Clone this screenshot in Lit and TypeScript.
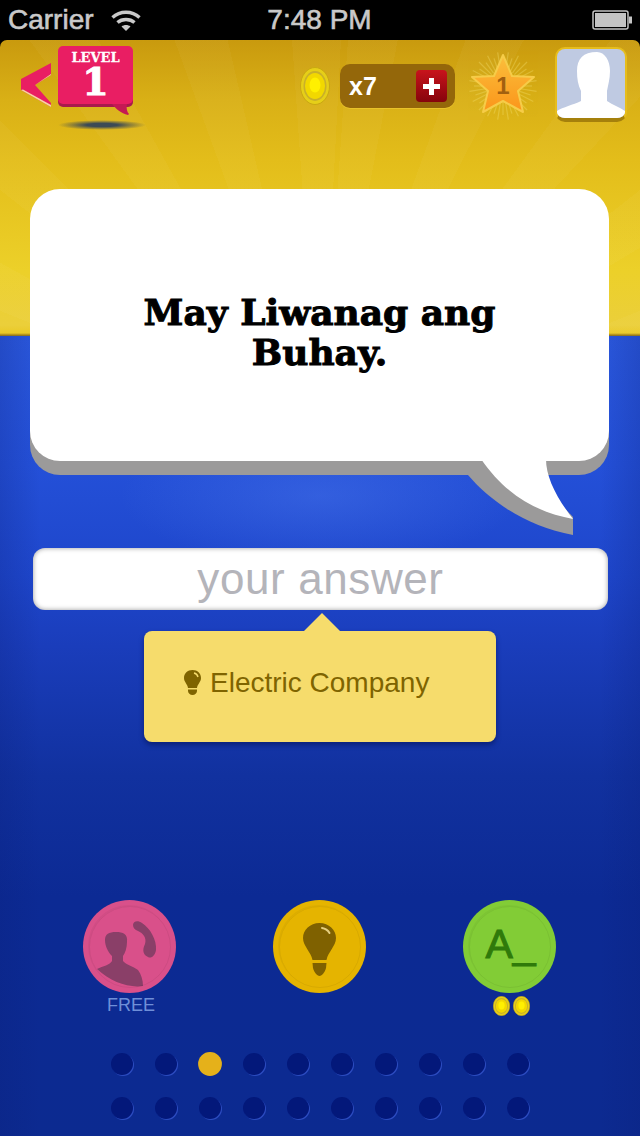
import { LitElement, css, html, svg } from 'lit';
import { customElement } from 'lit/decorators.js';

const SANS = '"Liberation Sans", Arial, sans-serif';

// rays round the level star
const starRays = Array.from({ length: 40 }, (_, i) => {
    const a = (i / 40) * Math.PI * 2;
    const r = i % 2 ? 34 : 29;
    return svg`<line x1="${35 + Math.cos(a) * 16}" y1="${36 + Math.sin(a) * 16}" x2="${35 + Math.cos(a) * r}" y2="${36 + Math.sin(a) * r}"></line>`;
});

@customElement('app-root')
export class AppRoot extends LitElement {
    static styles = css`
        :host{
            display: block;
            width: 640px;
            height: 1136px;
            background: #000;
            overflow: hidden;
            font-family: "Liberation Sans", Arial, sans-serif;
        }

        /* STATUS BAR */

        .status{
            height: 40px;
            display: grid;
            grid-template-columns: 1fr auto 1fr;
            align-items: center;
            padding: 0 7px 0 8px;
            color: #c9c9c9;
            font-size: 28px;
            line-height: 40px;
            box-sizing: border-box;
        }
        .carrier{
            display: flex;
            align-items: center;
            gap: 17px;
            -webkit-text-stroke: 0.6px #c9c9c9;
        }
        .time{
            -webkit-text-stroke: 0.6px #c9c9c9;
            margin-left: -2px;
        }
        .battery{
            justify-self: end;
            display: block;
        }

        /* GAME BACKGROUND */

        .game{
            position: relative;
            height: 1096px;
            border-radius: 7px 7px 0 0;
            overflow: hidden;
            background-repeat: no-repeat;
            background-size: 640px 296px, 640px 296px, 640px 296px, 640px 800px, 640px 800px, 640px 800px;
            background-position: 0 0, 0 0, 0 0, 0 100%, 0 100%, 0 100%;
            background-image:
                linear-gradient(to bottom, transparent 293px, #a8861a 295px, #7d6a26 296px),
                repeating-conic-gradient(from 4deg at 320px 400px, rgba(255,255,255,0.03) 0deg 7deg, rgba(255,255,255,0) 7deg 16deg),
                linear-gradient(to bottom, #c99a0e 0, #d9b016 60px, #e3bd1a 120px, #ecd029 230px, #ebcf3a 285px, #e9c71f 296px),
                linear-gradient(to right, rgba(10,30,120,0.22) 0, rgba(10,30,120,0) 40px, rgba(10,30,120,0) 600px, rgba(10,30,120,0.22) 640px),
                radial-gradient(ellipse 200px 70px at 320px 160px, rgba(90,135,245,0.3), rgba(90,135,245,0)),
                linear-gradient(to bottom, #2b58dd 0, #2450d8 130px, #1e46cb 240px, #1a3dbb 310px, #11319f 440px, #0c2a94 560px, #0c2a90 800px);
        }

        /* HEADER */

        .header{
            height: 149px;
            display: flex;
            align-items: flex-start;
            padding: 0 13px 0 21px;
            box-sizing: border-box;
        }
        .back{
            margin-top: 23px;
            display: block;
        }
        .level{
            position: relative;
            width: 75px;
            height: 58px;
            margin: 6px 0 0 7px;
            background: #e91e63;
            border-radius: 5px;
            box-shadow: 0 3px 0 #a81a4c;
            color: #fff;
            font-family: "DejaVu Serif", serif;
            font-weight: 700;
            text-align: center;
        }
        .level-label{
            font-size: 13px;
            line-height: 14px;
            padding-top: 5px;
            -webkit-text-stroke: 0.3px #fff;
        }
        .level-num{
            font-size: 38px;
            line-height: 30px;
            margin-top: 2px;
            -webkit-text-stroke: 1px #fff;
        }
        .level-tail{
            position: absolute;
            left: 54px;
            top: 58px;
        }
        .level-shadow{
            position: absolute;
            left: 0;
            top: 74px;
            width: 88px;
            height: 10px;
            border-radius: 50%;
            background: radial-gradient(closest-side, #3c4a55 35%, rgba(60,74,85,0.5) 65%, rgba(60,74,85,0));
        }
        .coin-big{
            margin: 27px 0 0 auto;
            display: block;
        }
        .coin-big svg, .mini-coins svg{
            display: block;
        }
        .coins{
            width: 115px;
            height: 44px;
            margin: 24px 0 0 10px;
            padding: 0 8px 0 9px;
            box-sizing: border-box;
            display: flex;
            align-items: center;
            justify-content: space-between;
            background: #94670a;
            border-radius: 10px;
            box-shadow: 0 1px 0 #e8c22a;
            color: #fff;
            font-size: 25px;
            font-weight: 700;
        }
        .plus{
            width: 31px;
            height: 32px;
            border-radius: 4px;
            background: linear-gradient(to bottom, #c8141c, #86040c);
            display: flex;
            align-items: center;
            justify-content: center;
        }
        .star{
            display: block;
            margin: 10px 0 0 13px;
        }
        .avatar{
            width: 72px;
            height: 75px;
            margin: 7px 0 0 17px;
            box-sizing: border-box;
            border: 2px solid #e6bd1c;
            border-bottom: 4px solid #a5800c;
            border-radius: 10px;
            background: #bfcae2;
            overflow: hidden;
        }
        .avatar svg{
            display: block;
        }

        /* QUESTION BUBBLE */

        .bubble{
            position: relative;
            height: 272px;
            margin: 0 31px 0 30px;
            border-radius: 30px;
            background: #fff;
            box-shadow: 0 14px 0 #9b9a9a;
            display: flex;
            align-items: center;
            justify-content: center;
            box-sizing: border-box;
            padding: 14px 100px 0;
            color: #000;
            font-family: "DejaVu Serif", serif;
            font-size: 36px;
            font-weight: 700;
            line-height: 40px;
            text-align: center;
            -webkit-text-stroke: 1px #000;
        }
        .bubble-tail{
            position: absolute;
            left: 430px;
            top: 270px;
        }

        /* ANSWER AND HINT */

        .answer{
            height: 62px;
            margin: 87px 32px 0 33px;
            border-radius: 12px;
            background: #fff;
            box-shadow: inset 0 0 5px rgba(0,0,0,0.4);
            color: #b4b4ba;
            font-size: 44px;
            line-height: 62px;
            text-align: center;
            letter-spacing: 0.6px;
        }
        .hint{
            position: relative;
            width: 352px;
            height: 111px;
            margin: 21px auto 0;
            padding: 0 0 8px 40px;
            box-sizing: border-box;
            display: flex;
            align-items: center;
            gap: 9px;
            background: #f6dc6c;
            border-radius: 8px;
            box-shadow: 0 3px 5px rgba(5,20,90,0.6);
            color: #7f6400;
            font-size: 28px;
        }
        .hint-arrow{
            position: absolute;
            left: 159px;
            top: -18px;
        }
        .hint svg.bulb{
            display: block;
        }

        /* LIFELINES */

        .actions{
            display: grid;
            grid-template-columns: repeat(3, 93px);
            justify-content: center;
            column-gap: 97px;
            margin: 158px 0 0 -2px;
        }
        .action{
            display: flex;
            flex-direction: column;
            align-items: center;
        }
        .disc{
            position: relative;
            width: 93px;
            height: 93px;
            border-radius: 50%;
            display: flex;
            align-items: center;
            justify-content: center;
            overflow: hidden;
        }
        .disc::before{
            content: "";
            position: absolute;
            inset: 6px 5px 5px 6px;
            border-radius: 50%;
            border: 1px solid rgba(0,0,0,0.06);
            box-shadow: -1px -1px 0 rgba(0,0,0,0.04);
        }
        .disc.pink{ background: #d9508a; }
        .disc.gold{ background: #e5b400; }
        .disc.green{ background: #82cc36; }
        .answer-icon{
            color: #2f7a0a;
            font-size: 41px;
            line-height: 41px;
            margin-top: -4px;
            padding-left: 3px;
            -webkit-text-stroke: 1px #2f7a0a;
        }
        .free{
            color: #6f8fd8;
            font-size: 18px;
            line-height: 24px;
            padding-left: 4px;
        }
        .mini-coins{
            display: flex;
            gap: 3px;
            margin-top: 3px;
            padding-left: 4px;
        }

        /* PROGRESS DOTS */

        .dots{
            display: grid;
            grid-template-columns: repeat(10, 22px);
            column-gap: 22px;
            row-gap: 22px;
            justify-content: center;
            margin: 36px 0 0 -1px;
        }
        .dot{
            width: 22px;
            height: 22px;
            box-sizing: border-box;
            border-radius: 50%;
            background: #03187a;
            box-shadow: 1px 1px 0 #2c4cc0;
        }
        .dot.on{
            background: #e5b11a;
            box-shadow: none;
            transform: scale(1.08);
        }
    `;

    renderCoin(width: number, height: number) {
        return html`<svg width="${width}" height="${height}" viewBox="0 0 30 38" preserveAspectRatio="none">
            <ellipse cx="15" cy="19" rx="14.5" ry="18.5" fill="#e6cf18" stroke="#c9a812" stroke-width="1"></ellipse>
            <ellipse cx="15" cy="19" rx="11.5" ry="15" fill="#c9b02a"></ellipse>
            <ellipse cx="15" cy="19" rx="10" ry="13" fill="#f2d800"></ellipse>
            <ellipse cx="15" cy="18" rx="5.5" ry="7.5" fill="#fff000"></ellipse>
        </svg>`;
    }

    render() {
        return html`
            <div class="status">
                <div class="carrier">
                    Carrier
                    <svg width="30" height="24" viewBox="0 0 30 24" fill="none" stroke="#c9c9c9" stroke-width="3.4">
                        <path d="M1.5 9.5 C9 2.5 21 2.5 28.5 9.5"></path>
                        <path d="M6.5 14.5 C11 10.5 19 10.5 23.5 14.5"></path>
                        <path d="M15 23 L10.5 18.5 C13 16.5 17 16.5 19.5 18.5 Z" fill="#c9c9c9" stroke="none"></path>
                    </svg>
                </div>
                <div class="time">7:48 PM</div>
                <svg class="battery" width="41" height="20" viewBox="0 0 41 20">
                    <rect x="1" y="1" width="35" height="18" rx="2" fill="none" stroke="#c4c4c4" stroke-width="1.5"></rect>
                    <rect x="3" y="3" width="31" height="14" fill="#c4c4c4"></rect>
                    <rect x="37" y="6.5" width="3" height="7" fill="#c4c4c4"></rect>
                </svg>
            </div>

            <main class="game">
                <header class="header">
                    <svg class="back" width="30" height="44" viewBox="0 0 30 44">
                        <path d="M30 0 L0 16 L0 27 L30 44 L30 40 L14 22 L30 12 Z" fill="#e91e63"></path>
                        <path d="M0 27 L30 44 L30 42 L2 26.5 Z" fill="#f6d8a0"></path>
                        <path d="M30 12 L14 22 L30 11 Z" fill="#f6d8a0"></path>
                    </svg>
                    <div class="level">
                        <div class="level-label">LEVEL</div>
                        <div class="level-num">1</div>
                        <svg class="level-tail" width="18" height="12" viewBox="0 0 18 12">
                            <path d="M0 0 L15 0 C14 4 15 8 17 10 L16 11 C9 9 4 5 0 0 Z" fill="#c41a54"></path>
                        </svg>
                        <div class="level-shadow"></div>
                    </div>

                    <div class="coin-big">${this.renderCoin(30, 38)}</div>
                    <div class="coins">
                        x7
                        <div class="plus">
                            <svg width="17" height="17" viewBox="0 0 17 17"><path d="M6 0 H11 V6 H17 V11 H11 V17 H6 V11 H0 V6 H6 Z" fill="#fff"></path></svg>
                        </div>
                    </div>
                    <svg class="star" width="70" height="70" viewBox="0 0 70 70">
                        <defs>
                            <linearGradient id="star-fill" x1="0" y1="0" x2="0" y2="1">
                                <stop offset="0" stop-color="#fbbf3c"></stop>
                                <stop offset="1" stop-color="#fb951a"></stop>
                            </linearGradient>
                        </defs>
                        <g stroke="#f4e070" stroke-width="1.2" opacity="0.35">${starRays}</g>
                        <path d="M35 5 L44 26 L66 27 L50 41 L55 62 L35 51 L15 62 L20 41 L4 27 L26 26 Z" fill="url(#star-fill)" stroke="#f6cc48" stroke-width="2" stroke-linejoin="round"></path>
                        <text x="35" y="44" text-anchor="middle" font-family=${SANS} font-size="24" font-weight="700" fill="#a2600f">1</text>
                    </svg>
                    <div class="avatar">
                        <svg width="68" height="69" viewBox="0 0 68 69">
                            <path d="M0 69 L0 62 C6 58 16 56 24 52 L24 42 C21 36 20 30 20 22 C20 10 26 3 40 3 C48 3 53 12 53 22 C53 30 51 36 50 42 L50 52 C56 56 62 58 68 62 L68 69 Z" fill="#fff"></path>
                        </svg>
                    </div>
                </header>

                <section class="bubble">
                    May Liwanag ang Buhay.
                    <svg class="bubble-tail" width="120" height="80" viewBox="0 0 120 80">
                        <path d="M8 16 C30 42 67 68 113 76 L113 58 L60 2 L8 2 Z" fill="#9b9a9a"></path>
                        <path d="M21 0 L86 0 C86 18 96 38 113 60 C80 54 47 38 21 0 Z" fill="#fff"></path>
                    </svg>
                </section>

                <div class="answer">your answer</div>

                <div class="hint">
                    <svg class="hint-arrow" width="38" height="19" viewBox="0 0 38 19"><path d="M19 0 L38 19 L0 19 Z" fill="#f6dc6c"></path></svg>
                    <svg class="bulb" width="17" height="25" viewBox="0 0 17 25">
                        <path d="M8.5 0 C13.5 0 17 3.5 17 8 C17 12 13.5 14 13 18 L4 18 C3.5 14 0 12 0 8 C0 3.5 3.5 0 8.5 0 Z" fill="#7f6400"></path>
                        <path d="M4 19.5 H13 V21 C13 23 11 25 8.5 25 C6 25 4 23 4 21 Z" fill="#7f6400"></path>
                        <path d="M10 3 C12 3.5 13.5 5 14 7" fill="none" stroke="#f6dc6c" stroke-width="1.4"></path>
                    </svg>
                    Electric Company
                </div>

                <div class="actions">
                    <div class="action">
                        <div class="disc pink">
                            <svg width="93" height="93" viewBox="0 0 93 93">
                                <path d="M14 69 C20 66 27 65 29 61 L29 56 C25 52 22 46 22 40 C22 34 26 32 33 32 C40 32 45 34 44 42 C44 48 42 53 40 56 L40 61 C43 65 50 66 55 70 C58 74 60 80 60 86 C45 88 28 82 14 69 Z" fill="#8a3f68"></path>
                                <path d="M50 25 C50 21 55 20 59 23 C67 28 74 40 73 50 C72 56 68 59 65 57 C60 55 59 50 62 44 C64 38 60 33 55 31 C52 30 50 28 50 25 Z" fill="#8a3f68"></path>
                            </svg>
                        </div>
                        <div class="free">FREE</div>
                    </div>
                    <div class="action">
                        <div class="disc gold">
                            <svg width="93" height="93" viewBox="0 0 93 93">
                                <path d="M46.5 23 C56 23 63 30 63 38 C63 46 55 52 53.5 60 L39.5 60 C38 52 30 46 30 38 C30 30 37 23 46.5 23 Z" fill="#7f6100"></path>
                                <path d="M39.5 63 H53.5 L53 68 C52 72 49 76 46.5 76 C44 76 41 72 40 68 Z" fill="#7f6100"></path>
                                <path d="M49 28 C52.5 28.5 55 30.5 56.5 33" fill="none" stroke="#e6cf80" stroke-width="2" stroke-linecap="round"></path>
                            </svg>
                        </div>
                    </div>
                    <div class="action">
                        <div class="disc green"><span class="answer-icon">A_</span></div>
                        <div class="mini-coins">
                            ${this.renderCoin(17, 20)}
                            ${this.renderCoin(17, 20)}
                        </div>
                    </div>
                </div>

                <div class="dots">
                    ${Array.from({ length: 20 }, (_, i) => html`<div class="dot ${i === 2 ? 'on' : ''}"></div>`)}
                </div>
            </main>
        `;
    }
}
